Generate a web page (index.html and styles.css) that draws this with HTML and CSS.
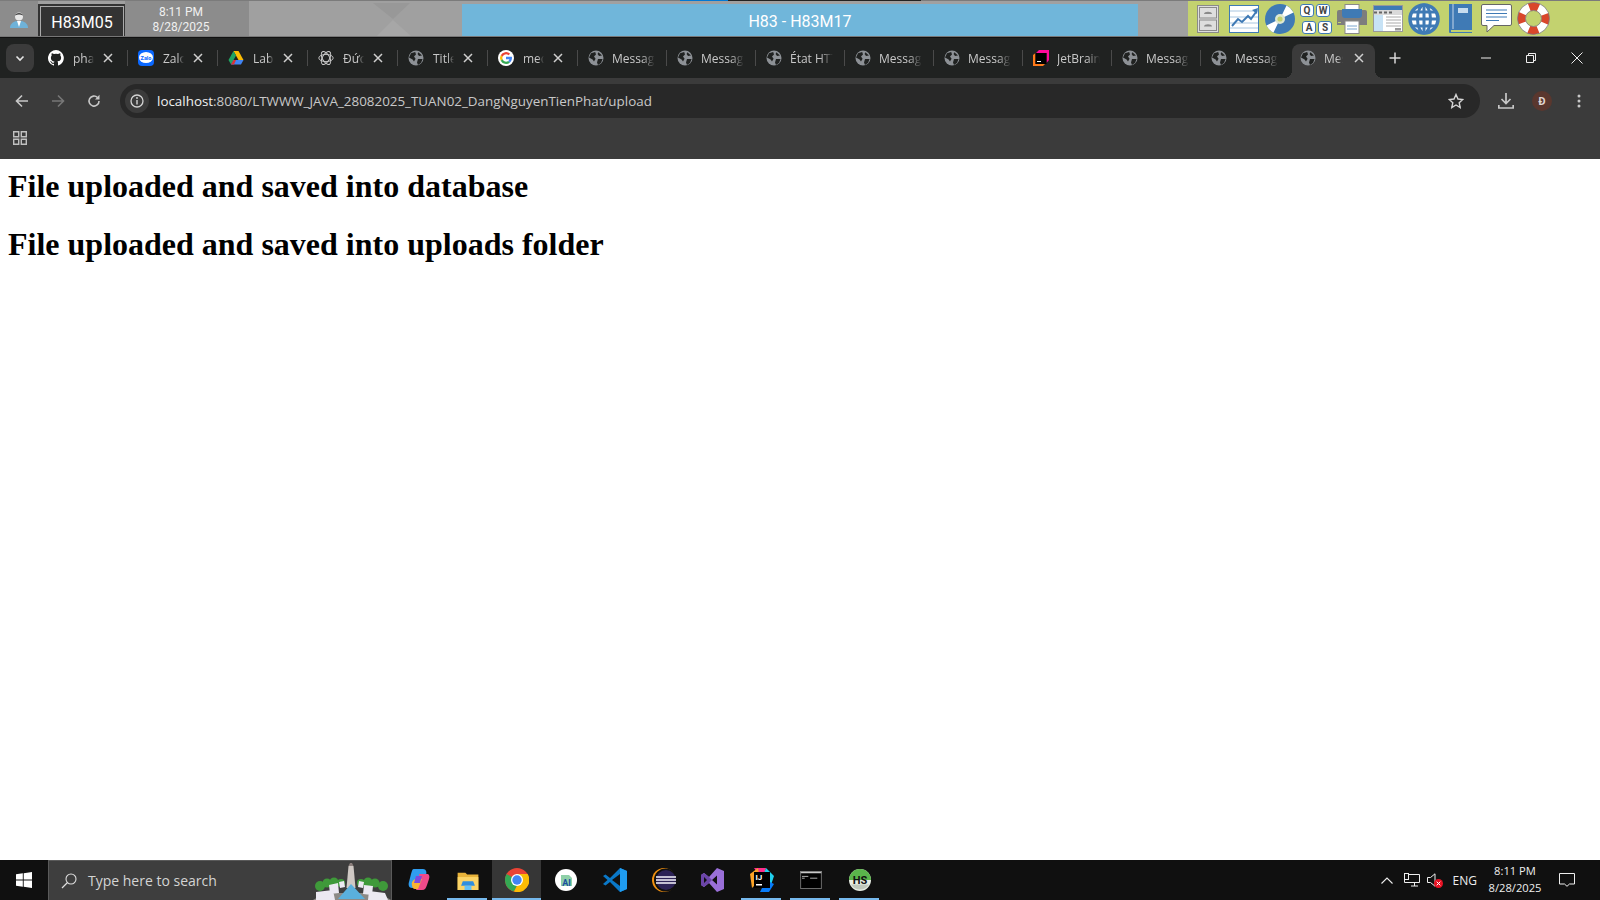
FILE: index.html
```html
<!DOCTYPE html>
<html>
<head>
<meta charset="utf-8">
<title>Upload</title>
<link rel="stylesheet" href="styles.css">
</head>
<body>
<svg class="defs" width="0" height="0">
  <symbol id="globe" viewBox="0 0 16 16">
    <circle cx="8" cy="8" r="7.5" fill="#8d9196"/>
    <path d="M3 3.200 7.200 2 8 4.600 6 6.400 7.600 8.800 6 11.400 4.600 9.600 1 7.400ZM10 9h4.600L13 13l-3 2-1-2.600ZM10.400 2.200 14 5.400l-3 .6-1.400-2Z" fill="#202221"/>
  </symbol>
  <symbol id="tabx" viewBox="0 0 10 10">
    <path d="M1 1l8 8M9 1l-8 8" stroke="#d0d0d0" stroke-width="1.500"/>
  </symbol>
</svg>

<!-- remote lab bar -->
<div class="labbar">
  <div class="strip"><span class="s-gap"></span><span class="s-blue"></span><span class="s-dark"></span></div>
  <div class="labrow">
    <div class="lab-user">
      <svg width="20" height="20" viewBox="0 0 20 20"><path d="M1 18c0-4 3-6 6-7h6c3 1 6 3 6 7Z" fill="#6fb2d8"/><path d="M8 11h4l-2 6Z" fill="#fff"/><circle cx="10" cy="6.500" r="4" fill="#e8e8e8"/><path d="M6 5.500C6 2 14 2 14 5.500 11 4 9 4 6 5.500Z" fill="#444"/></svg>
    </div>
    <div class="lab-name"><div class="lab-name-inner">H83M05</div></div>
    <div class="lab-clock"><span>8:11 PM</span><span>8/28/2025</span></div>
    <div class="lab-wall">
      <svg width="213" height="33" viewBox="0 0 213 33"><path d="M124 0h37l-17 16Z" fill="#989898"/><path d="M144 17l18 16h-34Z" fill="#a7a7a7"/></svg>
    </div>
    <div class="lab-title">H83 - H83M17</div>
    <div class="lab-gray"></div>
    <div class="lab-tools">
      <svg class="t-cabinet" width="22" height="28" viewBox="0 0 22 28"><rect x=".5" y=".5" width="21" height="27" fill="#dedede" stroke="#8a8a8a"/><rect x="2.500" y="2.500" width="17" height="10.500" fill="#dedede" stroke="#8a8a8a"/><rect x="2.500" y="15" width="17" height="10.500" fill="#dedede" stroke="#8a8a8a"/><path d="M7 9c0-3 8-3 8 0ZM7 21.500c0-3 8-3 8 0Z" fill="#8a8a8a"/></svg>
      <svg class="t-chart" width="30" height="28" viewBox="0 0 30 28"><rect x=".5" y=".5" width="29" height="27" fill="#fff" stroke="#3f7ab5"/><path d="M1 6h28M1 12h28M1 18h28M1 23h28" stroke="#a9c6e0"/><path d="M3 21l6-7 4 3 6-6 3 3 5-7" fill="none" stroke="#3f7ab5" stroke-width="2"/><path d="M29 3l-1 6-5-4Z" fill="#3f7ab5"/></svg>
      <svg class="t-disc" width="30" height="30" viewBox="0 0 30 30"><circle cx="15" cy="15" r="15" fill="#3f7ab5"/><path d="M15 15 21.500 1.500A15 15 0 0 1 28.500 8.500ZM15 15 1.500 21.500A15 15 0 0 0 8.500 28.500Z" fill="#fff"/><circle cx="15" cy="15" r="5" fill="#dfe8d0"/><circle cx="15" cy="15" r="2.600" fill="#c3d26f"/></svg>
      <div class="keys">
        <span class="key">Q</span><span class="key">W</span><span class="key key-low">A</span><span class="key key-low">S</span>
      </div>
      <svg class="t-printer" width="32" height="30" viewBox="0 0 32 30"><rect x="9" y=".5" width="14" height="8" fill="#fff" stroke="#8a8a8a"/><path d="M3 6h26a2 2 0 0 1 2 2v13H1V8a2 2 0 0 1 2-2Z" fill="#7d7d7d"/><path d="M6 5h20v6a3 3 0 0 1-3 3H9a3 3 0 0 1-3-3Z" fill="#3f7ab5"/><rect x="2" y="18" width="3" height="1" fill="#c3d26f"/><rect x="9" y="17" width="14" height="12.500" fill="#fff" stroke="#8a8a8a"/><path d="M11 22h10M11 25h10" stroke="#7aa5ce"/></svg>
      <svg class="t-window" width="30" height="27" viewBox="0 0 30 27"><rect width="30" height="27" fill="#fff"/><rect width="30" height="5" fill="#3f7ab5"/><rect y="5" width="30" height="5" fill="#dadada"/><path d="M1 6.500h3v2H1ZM6 6.500h3v2H6ZM11 6.500h3v2h-3ZM16 6.500h3v2h-3Z" fill="#666"/><rect y="10" width="10" height="17" fill="#c7e2f5"/><path d="M13 12h15M13 15h15M13 18h15M13 21h15" stroke="#aaa"/><rect x="22" y="23" width="6" height="2.500" fill="#999"/><rect x=".5" y=".5" width="29" height="26" fill="none" stroke="#999"/></svg>
      <svg class="t-globe" width="32" height="32" viewBox="0 0 32 32"><circle cx="16" cy="16" r="14" fill="#fff" stroke="#3f7ab5" stroke-width="3.500"/><ellipse cx="16" cy="16" rx="6.500" ry="14" fill="none" stroke="#3f7ab5" stroke-width="3"/><path d="M16 2v28M2 16h28M4.500 9h23M4.500 23h23" stroke="#3f7ab5" stroke-width="3"/></svg>
      <svg class="t-book" width="24" height="29" viewBox="0 0 24 29"><path d="M1 0h23v26H3v2h21v1H2a1 1 0 0 1-1-1Z" fill="#3f7ab5"/><path d="M5 0v25" stroke="#fff" stroke-width=".7"/><rect x="10" y="4" width="10" height="5" fill="#c7dcef"/></svg>
      <svg class="t-chat" width="31" height="29" viewBox="0 0 31 29"><path d="M2 .5h27a1.500 1.500 0 0 1 1.500 1.500v18a1.500 1.500 0 0 1-1.500 1.500H13L6 28v-6.500H2A1.500 1.500 0 0 1 .5 20V2A1.500 1.500 0 0 1 2 .5Z" fill="#fff" stroke="#666"/><path d="M5 6h21M5 9.500h21M5 13h21M5 16.500h13" stroke="#3f7ab5"/></svg>
      <svg class="t-ring" width="33" height="33" viewBox="0 0 33 33"><circle cx="16.500" cy="16.500" r="12" fill="none" stroke="#fff" stroke-width="8"/><circle cx="16.500" cy="16.500" r="12" fill="none" stroke="#d9472b" stroke-width="8" stroke-dasharray="9.400 9.450" stroke-dashoffset="4.700"/><circle cx="16.500" cy="16.500" r="16" fill="none" stroke="#777" stroke-width=".8"/><circle cx="16.500" cy="16.500" r="8" fill="none" stroke="#777" stroke-width=".8"/></svg>
    </div>
  </div>
</div>

<!-- chrome tabs -->
<div class="tabstrip">
  <div class="tab-search">
    <svg width="12" height="12" viewBox="0 0 12 12"><path d="M2.500 4.500 6 8l3.500-3.500" fill="none" stroke="#e6e6e6" stroke-width="1.600"/></svg>
  </div>
  <div class="tabs">
    <div class="tab">
      <svg class="fav" viewBox="0 0 16 16"><path fill="#fff" d="M8 0a8 8 0 0 0-2.500 15.600c.4.100.5-.2.500-.4v-1.400c-2.200.5-2.700-1-2.700-1-.4-.9-.9-1.200-.9-1.200-.7-.5.100-.5.100-.5.800.100 1.200.8 1.200.8.700 1.200 1.900.9 2.300.7.100-.5.300-.9.500-1.100-1.800-.2-3.600-.9-3.600-4 0-.9.300-1.600.8-2.100-.1-.2-.4-1 .1-2.100 0 0 .7-.2 2.200.8a7.600 7.600 0 0 1 4 0c1.500-1 2.200-.8 2.200-.8.400 1.100.2 1.900.1 2.100.5.600.8 1.300.8 2.100 0 3.100-1.900 3.700-3.700 3.900.3.300.6.800.6 1.500v2.200c0 .2.100.5.600.4A8 8 0 0 0 8 0Z"/></svg>
      <span class="tab-text">phatdang</span><svg class="tab-x"><use href="#tabx"/></svg>
    </div>
    <div class="tab">
      <svg class="fav" viewBox="0 0 16 16"><rect width="16" height="16" rx="4" fill="#0a68ff"/><ellipse cx="8" cy="7.500" rx="7" ry="5.500" fill="#fff"/><text x="8" y="9.500" class="zalo-text">Zalo</text></svg>
      <span class="tab-text">Zalo Web</span><svg class="tab-x"><use href="#tabx"/></svg>
    </div>
    <div class="tab">
      <svg class="fav" viewBox="0 0 16 16"><path d="M5.500 1h5l5 9h-5Z" fill="#fbbc04"/><path d="M5.500 1 .5 10 3 14.500l5-9Z" fill="#1fa463"/><path d="M5.500 10h10L13 14.500H3Z" fill="#4285f4"/><path d="M3 14.500 5.500 10H8l-2 4.500Z" fill="#d33"/></svg>
      <span class="tab-text">Labs</span><svg class="tab-x"><use href="#tabx"/></svg>
    </div>
    <div class="tab">
      <svg class="fav" viewBox="0 0 16 16"><g fill="none" stroke="#cfcfcf" stroke-width=".9"><ellipse cx="8" cy="8" rx="7.200" ry="3.600"/><ellipse cx="8" cy="8" rx="7.200" ry="3.600" transform="rotate(60 8 8)"/><ellipse cx="8" cy="8" rx="7.200" ry="3.600" transform="rotate(120 8 8)"/></g></svg>
      <span class="tab-text">Đức Phát</span><svg class="tab-x"><use href="#tabx"/></svg>
    </div>
    <div class="tab">
      <svg class="fav"><use href="#globe"/></svg>
      <span class="tab-text">Title</span><svg class="tab-x"><use href="#tabx"/></svg>
    </div>
    <div class="tab">
      <svg class="fav" viewBox="0 0 16 16"><circle cx="8" cy="8" r="8" fill="#fff"/><path d="M8 4.300a3.700 3.700 0 0 1 2.500 1l1.600-1.600A6 6 0 0 0 2.700 5.300l1.900 1.500A3.600 3.600 0 0 1 8 4.300Z" fill="#ea4335"/><path d="M4.300 8c0-.4.100-.8.300-1.200L2.700 5.300a6 6 0 0 0 0 5.400l1.900-1.500A3.600 3.600 0 0 1 4.300 8Z" fill="#fbbc04"/><path d="M8 11.700a3.600 3.600 0 0 1-3.400-2.500l-1.900 1.500A6 6 0 0 0 12 12.400l-1.800-1.400c-.6.400-1.300.7-2.200.7Z" fill="#34a853"/><path d="M14 8c0-.4 0-.8-.1-1.200H8v2.400h3.400c-.2.800-.6 1.400-1.200 1.800l1.800 1.400C13.200 11.300 14 9.800 14 8Z" fill="#4285f4"/></svg>
      <span class="tab-text">mediafire</span><svg class="tab-x"><use href="#tabx"/></svg>
    </div>
    <div class="tab narrow"><svg class="fav"><use href="#globe"/></svg><span class="tab-text">Message</span></div>
    <div class="tab narrow"><svg class="fav"><use href="#globe"/></svg><span class="tab-text">Message</span></div>
    <div class="tab narrow"><svg class="fav"><use href="#globe"/></svg><span class="tab-text">État HTTP</span></div>
    <div class="tab narrow"><svg class="fav"><use href="#globe"/></svg><span class="tab-text">Message</span></div>
    <div class="tab narrow"><svg class="fav"><use href="#globe"/></svg><span class="tab-text">Message</span></div>
    <div class="tab narrow">
      <svg class="fav" viewBox="0 0 16 16"><path d="M6 0h10v10l-2.500 3V3H3Z" fill="#ff0a9c"/><path d="M0 5l2.500-2v11H12l-2 2H0Z" fill="#ff7a1a"/><rect x="2.500" y="3" width="11" height="11" fill="#000"/><rect x="4" y="11" width="4" height="1" fill="#fff"/></svg>
      <span class="tab-text">JetBrains</span>
    </div>
    <div class="tab narrow"><svg class="fav"><use href="#globe"/></svg><span class="tab-text">Message</span></div>
    <div class="tab narrow last"><svg class="fav"><use href="#globe"/></svg><span class="tab-text">Message</span></div>
    <div class="tab active"><svg class="fav"><use href="#globe"/></svg><span class="tab-text">Message</span><svg class="tab-x"><use href="#tabx"/></svg></div>
  </div>
  <div class="tab-new">
    <svg width="12" height="12" viewBox="0 0 12 12"><path d="M6 .5v11M.5 6h11" stroke="#d8d8d8" stroke-width="1.500"/></svg>
  </div>
  <div class="win-btns">
    <svg width="10" height="10" viewBox="0 0 10 10"><path d="M0 5h10" stroke="#eee"/></svg>
    <svg width="10" height="10" viewBox="0 0 10 10"><path d="M.5 2.500h7v7h-7ZM2.500 2.500v-2h7v7h-2" fill="none" stroke="#eee"/></svg>
    <svg width="12" height="12" viewBox="0 0 12 12"><path d="M.5.500l11 11M11.500.500l-11 11" stroke="#eee"/></svg>
  </div>
</div>

<!-- address bar -->
<div class="toolbar">
  <div class="nav-btns">
    <svg width="14" height="14" viewBox="0 0 14 14"><path d="M13 7H2M7 1.500 1.500 7 7 12.500" fill="none" stroke="#c8c8c8" stroke-width="1.600"/></svg>
    <svg width="14" height="14" viewBox="0 0 14 14"><path d="M1 7h11M7 1.500 12.500 7 7 12.500" fill="none" stroke="#777" stroke-width="1.600"/></svg>
    <svg width="14" height="14" viewBox="0 0 14 14"><path d="M12 7a5 5 0 1 1-1.500-3.500" fill="none" stroke="#c8c8c8" stroke-width="1.600"/><path d="M12.500 .800v4.700H8Z" fill="#c8c8c8"/></svg>
  </div>
  <div class="omnibox">
    <div class="site-info">
      <svg width="14" height="14" viewBox="0 0 14 14"><circle cx="7" cy="7" r="6" fill="none" stroke="#d4d4d4" stroke-width="1.300"/><path d="M7 6v4.500" stroke="#d4d4d4" stroke-width="1.400"/><circle cx="7" cy="4" r=".9" fill="#d4d4d4"/></svg>
    </div>
    <div class="url"><span class="url-host">localhost</span>:8080/LTWWW_JAVA_28082025_TUAN02_DangNguyenTienPhat/upload</div>
    <svg class="star" width="16" height="16" viewBox="0 0 16 16"><path d="M8 1.500 10 6l4.800.5-3.600 3.200 1 4.800L8 12l-4.200 2.500 1-4.800L1.200 6.500 6 6Z" fill="none" stroke="#d4d4d4" stroke-width="1.400"/></svg>
  </div>
  <div class="tool-btns">
    <svg width="16" height="16" viewBox="0 0 16 16"><path d="M8 0v10M3.500 6 8 10.500 12.500 6M.8 12v3h14.400v-3" fill="none" stroke="#c8c8c8" stroke-width="1.700"/></svg>
    <span class="avatar">Đ</span>
    <svg width="4" height="14" viewBox="0 0 4 14"><circle cx="2" cy="2" r="1.500" fill="#c8c8c8"/><circle cx="2" cy="7" r="1.500" fill="#c8c8c8"/><circle cx="2" cy="12" r="1.500" fill="#c8c8c8"/></svg>
  </div>
</div>
<div class="bookmarks">
  <svg width="14" height="14" viewBox="0 0 14 14"><path d="M.7.700h5v5h-5ZM8.300.700h5v5h-5ZM.7 8.300h5v5h-5ZM8.300 8.300h5v5h-5Z" fill="none" stroke="#c0c0c0" stroke-width="1.400"/></svg>
</div>

<div class="page">
  <h1>File uploaded and saved into database</h1>
  <h1>File uploaded and saved into uploads folder</h1>
</div>

<!-- windows taskbar -->
<div class="taskbar">
  <div class="start">
    <svg width="16" height="16" viewBox="0 0 16 16"><path d="M0 2.300 6.800 1.300v6.300H0ZM7.700 1.200 16 0v7.600H7.700ZM0 8.400h6.800v6.300L0 13.700ZM7.700 8.400H16V16l-8.300-1.200Z" fill="#fff"/></svg>
  </div>
  <div class="search">
    <svg width="16" height="16" viewBox="0 0 16 16"><circle cx="10" cy="6" r="5" fill="none" stroke="#ddd" stroke-width="1.100"/><path d="M6.500 9.500 1 15" stroke="#ddd" stroke-width="1.200"/></svg>
    <span class="search-text">Type here to search</span>
    <svg class="search-art" width="78" height="38" viewBox="0 0 78 38"><path d="M0 38 12 31h54l12 7Z" fill="#8d8a86"/><g fill="#3f9a3a"><circle cx="7" cy="24" r="5"/><circle cx="14" cy="21" r="4.500"/><circle cx="21" cy="20" r="4.500"/><circle cx="28" cy="21" r="4"/><circle cx="48" cy="21" r="4"/><circle cx="55" cy="20" r="4.500"/><circle cx="62" cy="21" r="4.500"/><circle cx="70" cy="24" r="5"/></g><path d="M35.500 4h5l2 22h-9Z" fill="#cfc8c4"/><path d="M37 1h2l1.500 3h-5Z" fill="#8b7f7c"/><path d="M38 22 25 37h27Z" fill="#5ab0dd"/><path d="M3 30l17-2 2 10H3ZM16 23l9-2 1 10-9 1ZM26 20l5-1 1 6-5 1ZM46 19l5 1-1 6-5-1ZM51 23l9 1-1 9-9-1ZM56 29l16 2 3 7H55Z" fill="#ece9f2"/></svg>
  </div>
  <div class="task">
    <svg width="24" height="24" viewBox="0 0 24 24"><path d="M7 1h9c3 0 4 3 3 6l-3 9c-1 3-3 4-6 4H5c-3 0-4-3-3-6l2-8c1-3 1-5 3-5Z" fill="#2f9df0"/><path d="M12 6h8c2 0 3 2 2 5l-2 6c-1 3-2 5-5 5h-6l4-10Z" fill="#f04a8a"/><path d="M5 17c-1-3 2-6 4-6h6l-4 10H8c-2 0-3-2-3-4Z" fill="#f9b233"/><path d="M9 8h6l-2 7H7Z" fill="#7b4ae0"/></svg>
  </div>
  <div class="task run">
    <svg width="22" height="19" viewBox="0 0 24 22"><path d="M0 2h9l2 2h13v18H0Z" fill="#e8b33a"/><path d="M0 7h24v15H0Z" fill="#fbd467"/><path d="M6 12h12l2 5H4Z" fill="#2f8fe0"/><path d="M8 17h8v5H8Z" fill="#63c1f7"/></svg>
  </div>
  <div class="task active-app">
    <svg width="24" height="24" viewBox="0 0 24 24"><circle cx="12" cy="12" r="12" fill="#ea4335"/><path d="M12 12 1.600 6A12 12 0 0 0 9 23.600L15 12Z" fill="#34a853"/><path d="M12 6h10.600A12 12 0 0 1 9 23.600L15 12Z" fill="#fbbc04"/><circle cx="12" cy="12" r="6" fill="#fff"/><circle cx="12" cy="12" r="4.700" fill="#4285f4"/></svg>
  </div>
  <div class="task">
    <svg width="22" height="22" viewBox="0 0 22 22"><circle cx="11" cy="11" r="11" fill="#fff"/><path d="M6 6h8l3 3v8H6Z" fill="#8fd0a8"/><text x="11.500" y="17" class="ai-text">AI</text></svg>
  </div>
  <div class="task">
    <svg width="24" height="24" viewBox="0 0 24 24"><path d="M17 0 7 10 2.500 6.500 0 8l4.500 4L0 16l2.500 1.500L7 14l10 10 7-3V3Z" fill="#0a78c8"/><path d="M17 6v12l-8-6Z" fill="#111"/><path d="M17 0l7 3v18l-7 3Z" fill="#1f9cf0"/></svg>
  </div>
  <div class="task">
    <svg width="24" height="24" viewBox="0 0 24 24"><circle cx="12" cy="12" r="12" fill="#f29111"/><circle cx="13.500" cy="12" r="11.500" fill="#101010"/><circle cx="14" cy="12" r="10" fill="#2c2255"/><path d="M4 9h20M4 12h20M4 15h20" stroke="#f5f3fa" stroke-width="1.600"/></svg>
  </div>
  <div class="task">
    <svg width="23" height="24" viewBox="0 0 23 24"><path d="M16 0 23 3v18l-7 3-8-9-5 4-3-2V7l3-2 5 4Z" fill="#9a6fd8"/><path d="M0 7l3-2 5 4 3 3-3 3-5 4-3-2Z" fill="#6b45a8"/><path d="M16 7.500v9L11 12ZM3 9v6l3-3Z" fill="#101010"/></svg>
  </div>
  <div class="task run">
    <svg width="24" height="24" viewBox="0 0 24 24"><path d="M4 0h12l-2 6H8Z" fill="#ff2d8a"/><path d="M0 6 8 0l2 12L2 20Z" fill="#fca326"/><path d="M16 0l8 8-4 12H8Z" fill="#21d0ef"/><path d="M10 24h9l5-8-8-4Z" fill="#087cfa"/><rect x="4" y="4" width="16" height="16" fill="#000"/><text x="5.500" y="12" class="ij-text">IJ</text><rect x="6" y="16" width="6" height="1.500" fill="#fff"/></svg>
  </div>
  <div class="task run">
    <svg width="22" height="18" viewBox="0 0 24 20"><rect width="24" height="20" fill="#000"/><rect width="24" height="2.500" fill="#c8c8c8"/><path d="M2 6h7M2 8h3M11 8h8" stroke="#bbb"/><rect x=".5" y=".5" width="23" height="19" fill="none" stroke="#777"/></svg>
  </div>
  <div class="task run">
    <svg width="22" height="22" viewBox="0 0 24 24"><circle cx="12" cy="12" r="12" fill="#e8eee4"/><path d="M0 12a12 12 0 0 1 24 0Z" fill="#5ab54b"/><path d="M2 17h20a12 12 0 0 1-20 0Z" fill="#c0c8bc"/><text x="12" y="16.500" class="hs-text">HS</text></svg>
  </div>
  <div class="tray">
    <svg class="tray-up" width="12" height="7" viewBox="0 0 12 7"><path d="M.5 6.500 6 1l5.500 5.500" fill="none" stroke="#eee" stroke-width="1.100"/></svg>
    <svg class="tray-net" width="16" height="14" viewBox="0 0 16 14"><path d="M5 1.500h10.500v8H.5V7M7 13h7M10.500 9.500V13" fill="none" stroke="#eee"/><rect x=".5" y=".5" width="4" height="6" fill="#111" stroke="#eee"/></svg>
    <span class="tray-sound">
      <svg width="9" height="14" viewBox="0 0 9 14"><path d="M.5 4.500h3L8 .800v12.400L3.500 9.500h-3Z" fill="none" stroke="#eee"/></svg>
      <svg class="mute" width="9" height="9" viewBox="0 0 9 9"><circle cx="4.500" cy="4.500" r="4.500" fill="#e81123"/><path d="M2.700 2.700l3.600 3.600M6.300 2.700 2.700 6.300" stroke="#fff"/></svg>
    </span>
    <span class="tray-lang">ENG</span>
    <div class="tray-clock"><span>8:11 PM</span><span>8/28/2025</span></div>
    <svg class="tray-note" width="16" height="14" viewBox="0 0 16 14"><path d="M.5.500h15v10.500h-5L8 13.300 5.500 11h-5Z" fill="none" stroke="#eee"/></svg>
  </div>
</div>
</body>
</html>
```

FILE: styles.css
```css
html, body {
  margin: 0;
  height: 100%;
}
body {
  width: 1600px;
  height: 900px;
  display: flex;
  flex-direction: column;
  overflow: hidden;
  background: #fff;
  font-family: "Open Sans", "Noto Sans", sans-serif;
}
.defs {
  position: absolute;
}

/* lab bar */
.labbar {
  height: 38px;
  background: #a0a0a0;
  border-bottom: 1px solid #111;
  box-sizing: border-box;
  flex-shrink: 0;
  font-family: Roboto, sans-serif;
  color: #fff;
}
.strip {
  height: 1px;
  background: #7b7b7b;
  display: flex;
}
.s-gap { width: 680px; }
.s-blue { width: 48px; background: #0078d4; }
.s-dark { width: 193px; background: #222; }
.labrow {
  height: 36px;
  display: flex;
  border-bottom: 1px solid #777;
  box-sizing: border-box;
}
.lab-user {
  width: 38px;
  background: #8c8c8c;
  display: flex;
  align-items: center;
  justify-content: center;
  padding-top: 2px;
  box-sizing: border-box;
}
.lab-name {
  width: 87px;
  margin-top: 3px;
  background: #333;
  padding: 2px 1px 0 2px;
  box-sizing: border-box;
}
.lab-name-inner {
  height: 100%;
  border: 1px solid #aaa;
  border-bottom: 0;
  box-sizing: border-box;
  font-size: 16px;
  display: flex;
  align-items: center;
  justify-content: center;
  padding-top: 2px;
}
.lab-clock {
  width: 124px;
  background: #8c8c8c;
  color: #f0f0f0;
  display: flex;
  flex-direction: column;
  align-items: center;
  justify-content: center;
  font-size: 12px;
  line-height: 15.5px;
  padding: 3px 12px 0 0;
  box-sizing: border-box;
}
.lab-wall {
  width: 213px;
  padding-top: 2px;
  box-sizing: border-box;
}
.lab-wall svg {
  display: block;
}
.lab-title {
  width: 676px;
  margin-top: 3px;
  padding-top: 2px;
  box-sizing: border-box;
  background: #70b6da;
  font-size: 16px;
  display: flex;
  align-items: center;
  justify-content: center;
}
.lab-gray {
  width: 50px;
}
.lab-tools {
  flex: 1;
  background: #c3d26f;
  display: flex;
  align-items: center;
  gap: 5px;
  padding-left: 9px;
  box-sizing: border-box;
}
.lab-tools svg {
  flex-shrink: 0;
}
.t-chart { margin-left: 5px; }
.t-disc { margin-left: 1px; }
.t-printer { margin-left: -1px; }
.t-book { margin-left: 3px; }
.t-chat { margin-left: 4px; }
.keys {
  width: 32px;
  height: 30px;
  display: grid;
  grid-template-columns: 14px 14px;
  grid-template-rows: 13px 13px;
  column-gap: 2px;
  row-gap: 4px;
}
.key {
  border: 1px solid #3f7ab5;
  border-radius: 3px;
  background: #fff;
  color: #444;
  font-size: 10px;
  font-weight: bold;
  display: flex;
  align-items: center;
  justify-content: center;
}
.key-low {
  transform: translateX(2px);
}

/* tabs */
.tabstrip {
  height: 40px;
  flex-shrink: 0;
  background: #202221;
  display: flex;
  align-items: flex-end;
  font-size: 12px;
  color: #c8c8c8;
}
.tab-search {
  width: 28px;
  height: 28px;
  background: #3b3b3b;
  border-radius: 8px;
  margin: 0 4px 6px 6px;
  display: flex;
  align-items: center;
  justify-content: center;
}
.tabs {
  display: flex;
  height: 34px;
}
.tab {
  width: 90px;
  height: 34px;
  display: flex;
  align-items: center;
  padding: 0 0 0 10px;
  box-sizing: border-box;
  position: relative;
}
.tab::after {
  content: "";
  position: absolute;
  right: 0;
  top: 6px;
  height: 16px;
  width: 1px;
  background: #4a4a4a;
}
.tab.narrow {
  width: 89px;
  padding-right: 12px;
}
.tab.narrow .fav {
  margin-right: 8px;
}
.tab.last::after {
  display: none;
}
.tab.active {
  width: 83px;
  margin-left: 2px;
  background: #3b3b3b;
  border-radius: 8px 8px 0 0;
  padding-left: 8px;
}
.tab.active .fav {
  margin-right: 8px;
}
.tab.active::before,
.tab.active::after {
  content: "";
  position: absolute;
  top: auto;
  bottom: 0;
  width: 8px;
  height: 8px;
}
.tab.active::before {
  left: -8px;
  background: radial-gradient(circle at 0 0, transparent 8px, #3b3b3b 8px);
}
.tab.active::after {
  right: -8px;
  background: radial-gradient(circle at 100% 0, transparent 8px, #3b3b3b 8px);
}
.fav {
  width: 16px;
  height: 16px;
  flex-shrink: 0;
  margin-right: 9px;
  margin-top: -6px;
}
.tab-text {
  flex: 1;
  min-width: 0;
  white-space: nowrap;
  overflow: hidden;
  margin-top: -6px;
  -webkit-mask-image: linear-gradient(to right, #000 70%, transparent 100%);
  mask-image: linear-gradient(to right, #000 70%, transparent 100%);
}
.tab-x {
  width: 10px;
  height: 10px;
  flex-shrink: 0;
  margin: -6px 15px 0 9px;
}
.tab.active .tab-x {
  margin: -6px 11px 0 11px;
}
.tab-new {
  width: 12px;
  height: 34px;
  margin-left: 14px;
  display: flex;
  align-items: center;
  padding-bottom: 6px;
  box-sizing: border-box;
}
.win-btns {
  margin-left: auto;
  height: 40px;
  display: flex;
  align-items: center;
  gap: 35px;
  padding: 0 17px 0 0;
  box-sizing: border-box;
}

/* toolbar */
.toolbar {
  height: 40px;
  flex-shrink: 0;
  background: #3b3b3b;
  display: flex;
  align-items: flex-end;
}
.nav-btns {
  width: 120px;
  height: 34px;
  display: flex;
  align-items: center;
  gap: 22px;
  padding-left: 15px;
  box-sizing: border-box;
}
.omnibox {
  width: 1360px;
  height: 34px;
  background: #282828;
  border-radius: 17px;
  display: flex;
  align-items: center;
  color: #c8c8c8;
  font-size: 13.4px;
}
.site-info {
  width: 24px;
  height: 24px;
  border-radius: 50%;
  background: #3b3b3b;
  margin: 0 8px 0 5px;
  display: flex;
  align-items: center;
  justify-content: center;
}
.url {
  flex: 1;
}
.url-host {
  color: #f0f0f0;
}
.star {
  margin-right: 16px;
}
.tool-btns {
  flex: 1;
  height: 34px;
  display: flex;
  align-items: center;
  padding-left: 18px;
  box-sizing: border-box;
}
.avatar {
  width: 20px;
  height: 20px;
  border-radius: 50%;
  background: #5a372e;
  color: #e0d8d4;
  font-size: 10px;
  font-weight: bold;
  display: flex;
  align-items: center;
  justify-content: center;
  margin: 0 25px 0 18px;
}
.bookmarks {
  height: 41px;
  flex-shrink: 0;
  background: #3b3b3b;
  display: flex;
  align-items: center;
  padding: 0 0 1px 13px;
  box-sizing: border-box;
}

/* page body */
.page {
  flex: 1;
  padding: 9px 8px 8px;
  color: #000;
}
h1 {
  margin: 0 0 21px;
  font-family: "Liberation Serif", serif;
  font-size: 32px;
  line-height: 37px;
}

/* taskbar */
.taskbar {
  height: 40px;
  flex-shrink: 0;
  background: #101010;
  display: flex;
  align-items: stretch;
  color: #eee;
}
.start {
  width: 48px;
  display: flex;
  align-items: center;
  justify-content: center;
}
.search {
  width: 344px;
  background: #3e3e3e;
  border: 1px solid #5a5a5a;
  border-bottom: 0;
  box-sizing: border-box;
  display: flex;
  align-items: center;
  padding-left: 12px;
  position: relative;
  margin-right: 2px;
  font-size: 14px;
  color: #d4d4d4;
}
.search-text {
  margin-left: 11px;
}
.search-art {
  position: absolute;
  right: 0;
  bottom: 0;
}
.task {
  width: 49px;
  display: flex;
  align-items: center;
  justify-content: center;
  position: relative;
}
.active-app {
  background: #363636;
}
.run::after,
.active-app::after {
  content: "";
  position: absolute;
  left: 4px;
  right: 5px;
  bottom: 0;
  height: 2px;
  background: #76b9ed;
}
.active-app::after {
  left: 0;
  right: 0;
}
.tray {
  flex: 1;
  display: flex;
  align-items: center;
  font-size: 12px;
  font-family: "Open Sans", sans-serif;
}
.tray-up {
  margin-left: auto;
}
.tray-net {
  margin-left: 11px;
}
.tray-sound {
  position: relative;
  width: 16px;
  height: 16px;
  margin-left: 7px;
  display: flex;
  align-items: center;
}
.mute {
  position: absolute;
  right: 0;
  bottom: 0;
}
.tray-lang {
  margin-left: 10px;
}
.tray-clock {
  width: 76px;
  padding-bottom: 2px;
  display: flex;
  flex-direction: column;
  align-items: center;
  font-size: 11.2px;
  line-height: 17px;
}
.tray-note {
  margin: 0 25px 0 6px;
}
.zalo-text {
  font-family: Roboto, sans-serif;
  font-size: 5.500px;
  font-weight: bold;
  fill: #0a68ff;
  text-anchor: middle;
}
.ai-text {
  font-family: Roboto, sans-serif;
  font-size: 9px;
  font-weight: bold;
  fill: #1a4fa0;
  text-anchor: middle;
}
.ij-text {
  font-family: Roboto, sans-serif;
  font-size: 8px;
  font-weight: bold;
  fill: #fff;
}
.hs-text {
  font-family: Roboto, sans-serif;
  font-size: 12px;
  font-weight: bold;
  fill: #111;
  text-anchor: middle;
}
```
